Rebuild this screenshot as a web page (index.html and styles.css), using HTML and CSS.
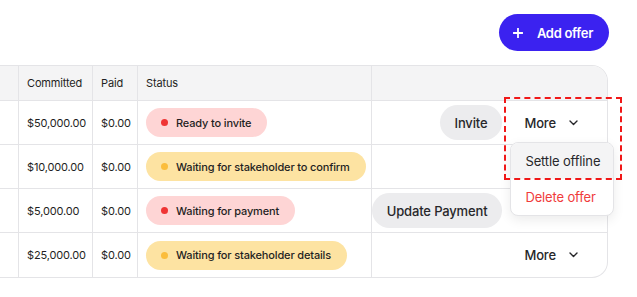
FILE: index.html
```html
<!DOCTYPE html>
<html>
<head>
<meta charset="utf-8">
<link rel="stylesheet" href="styles.css">
</head>
<body>
<div class="page">
  <div class="toolbar">
    <button class="add-btn">
      <svg width="10" height="10" viewBox="0 0 10 10"><path d="M5 0.5v9M0.5 5h9" stroke="#fff" stroke-width="1.8" stroke-linecap="round"/></svg>
      <span>Add offer</span>
    </button>
  </div>
  <div class="table">
    <div class="cell head first"></div>
    <div class="cell head">Committed</div>
    <div class="cell head">Paid</div>
    <div class="cell head">Status</div>
    <div class="cell head last-head"></div>

    <div class="cell first"></div>
    <div class="cell">$50,000.00</div>
    <div class="cell">$0.00</div>
    <div class="cell"><span class="pill red"><i class="dot"></i>Ready to invite</span></div>
    <div class="cell actions">
      <button class="btn">Invite</button>
      <div class="more-wrap">
        <button class="more">More <svg width="9" height="6" viewBox="0 0 9 6"><path d="M1 1l3.5 3.5L8 1" fill="none" stroke="#27272a" stroke-width="1.4" stroke-linecap="round" stroke-linejoin="round"/></svg></button>
        <div class="menu">
          <div class="menu-item active">Settle offline</div>
          <div class="menu-item danger">Delete offer</div>
        </div>
        <div class="annot"></div>
      </div>
    </div>

    <div class="cell first"></div>
    <div class="cell">$10,000.00</div>
    <div class="cell">$0.00</div>
    <div class="cell"><span class="pill yellow"><i class="dot"></i>Waiting for stakeholder to confirm</span></div>
    <div class="cell actions">
      <div class="more-wrap">
        <button class="more">More <svg width="9" height="6" viewBox="0 0 9 6"><path d="M1 1l3.5 3.5L8 1" fill="none" stroke="#27272a" stroke-width="1.4" stroke-linecap="round" stroke-linejoin="round"/></svg></button>
      </div>
    </div>

    <div class="cell first"></div>
    <div class="cell">$5,000.00</div>
    <div class="cell">$0.00</div>
    <div class="cell"><span class="pill red"><i class="dot"></i>Waiting for payment</span></div>
    <div class="cell actions">
      <button class="btn">Update Payment</button>
      <div class="more-wrap">
        <button class="more">More <svg width="9" height="6" viewBox="0 0 9 6"><path d="M1 1l3.5 3.5L8 1" fill="none" stroke="#27272a" stroke-width="1.4" stroke-linecap="round" stroke-linejoin="round"/></svg></button>
      </div>
    </div>

    <div class="cell first last-row"></div>
    <div class="cell last-row">$25,000.00</div>
    <div class="cell last-row">$0.00</div>
    <div class="cell last-row"><span class="pill yellow"><i class="dot"></i>Waiting for stakeholder details</span></div>
    <div class="cell actions last-row">
      <div class="more-wrap">
        <button class="more">More <svg width="9" height="6" viewBox="0 0 9 6"><path d="M1 1l3.5 3.5L8 1" fill="none" stroke="#27272a" stroke-width="1.4" stroke-linecap="round" stroke-linejoin="round"/></svg></button>
      </div>
    </div>
  </div>
</div>
</body>
</html>
```
FILE: styles.css
```css
* { box-sizing: border-box; }
html, body { margin: 0; padding: 0; background: #fff; }
body { font-family: Inter, "Noto Sans", sans-serif; color: #1f1f23; }
.page { width: 637px; padding-top: 14px; }
.toolbar { display: flex; justify-content: flex-end; padding-right: 28px; margin-bottom: 14px; }
.add-btn {
  display: flex; align-items: center; gap: 14px;
  height: 37px; padding: 0 16px 0 14px;
  background: #3b22f0; color: #fff; border: none; border-radius: 19px;
  font-family: inherit; font-size: 13px; font-weight: 600; letter-spacing: -0.3px;
}
.table {
  display: grid;
  grid-template-columns: 18px 74px 45px 234px 236px;
  width: 608px;
  border: 1px solid #e4e4e7; border-left: none;
  border-radius: 0 16px 16px 0;
  font-size: 11px; letter-spacing: -0.15px;
}
.cell {
  display: flex; align-items: center;
  height: 44px; padding: 0 8px;
  border-left: 1px solid #e4e4e7; border-bottom: 1px solid #e4e4e7;
  color: #1f1f23; white-space: nowrap;
}
.cell.first { border-left: none; }
.cell.last-row { border-bottom: none; height: 44px; }
.cell.head { height: 35px; background: #f4f4f5; color: #1f1f23; }
.cell.last-head { border-top-right-radius: 15px; }
.pill {
  display: inline-flex; align-items: center; gap: 8px;
  height: 29px; padding: 0 16px 0 15px; border-radius: 15px;
  font-weight: 500; white-space: nowrap;
}
.dot { display: block; width: 7px; height: 7px; border-radius: 50%; }
.pill.red { background: #fed5d5; }
.pill.red .dot { background: #ef3434; }
.pill.yellow { background: #fde3a2; }
.pill.yellow .dot { background: #fbbd3c; }
.actions { justify-content: flex-end; gap: 8px; padding-right: 15px; }
.btn {
  height: 35px; padding: 0 15px; border: none; border-radius: 18px;
  background: #ececee; color: #27272a;
  font-family: inherit; font-size: 13px; font-weight: 500; letter-spacing: -0.15px; white-space: nowrap;
}
.more-wrap { position: relative; }
.more {
  display: flex; align-items: center; gap: 13px;
  height: 35px; padding: 0 14px; border: none; background: transparent;
  color: #27272a; font-family: inherit; font-size: 13px; font-weight: 500; letter-spacing: -0.15px;
}
.menu {
  position: absolute; top: calc(100% + 2px); left: 0; z-index: 2;
  width: 104px; background: #fff;
  border: 1px solid #e4e4e7; border-radius: 8px;
  box-shadow: 0 4px 12px rgba(0,0,0,0.08);
  overflow: hidden;
}
.menu-item { height: 36px; display: flex; align-items: center; padding: 0 14px; font-size: 13px; letter-spacing: -0.15px; color: #27272a; white-space: nowrap; }
.menu-item.active { background: #f4f4f5; }
.menu-item.danger { color: #f03b3b; }
.annot {
  position: absolute; left: -6px; top: -8px; z-index: 3;
  width: 118px; height: 83px;
  border: 2px dashed #f01818; pointer-events: none;
}
```
